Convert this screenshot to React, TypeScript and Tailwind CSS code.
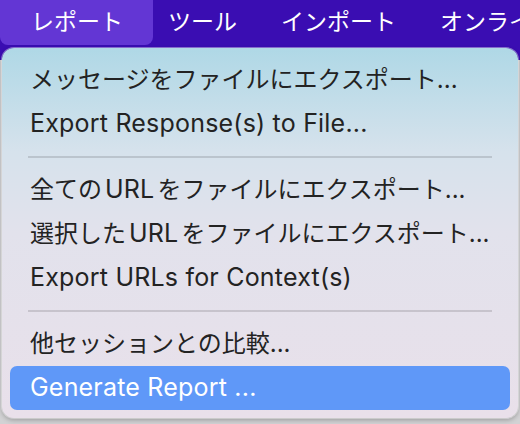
const FONT = "font-['Inter','Noto_Sans_CJK_JP',sans-serif]";

const MENUBAR = ["ツール", "インポート", "オンライン"];

type Row = { label: string; latin?: boolean; active?: boolean } | "sep";

const ITEMS: Row[] = [
  { label: "メッセージをファイルにエクスポート..." },
  { label: "Export Response(s) to File...", latin: true },
  "sep",
  { label: "全ての|URL|をファイルにエクスポート..." },
  { label: "選択した|URL|をファイルにエクスポート..." },
  { label: "Export URLs for Context(s)", latin: true },
  "sep",
  { label: "他セッションとの比較..." },
  { label: "Generate Report ...", latin: true, active: true },
];

// "|"-delimited middle part is Latin text set inside Japanese
function Label({ text }: { text: string }) {
  const parts = text.split("|");
  if (parts.length === 1) return <>{text}</>;
  return (
    <>
      {parts[0]}
      <span className="px-[3px] text-[25px] tracking-[0.2px]">{parts[1]}</span>
      {parts[2]}
    </>
  );
}

export default function App() {
  return (
    <div
      className={`w-[520px] h-[424px] overflow-hidden bg-[linear-gradient(#3a0db2_0_60px,#d2d2d4_60px)] ${FONT}`}
    >
      {/* Menu bar */}
      <div className="flex h-[48px] items-start bg-[#3a0db2] text-[23px] text-white whitespace-nowrap">
        <div className="flex h-[45px] w-[153px] shrink-0 items-center rounded-b-[8px] bg-[#6336d4] pl-[31px]">
          レポート
        </div>
        <div className="ml-[15px] flex h-[45px] shrink-0 items-center gap-[44px]">
          {MENUBAR.map((m) => (
            <span key={m}>{m}</span>
          ))}
        </div>
      </div>

      {/* Dropdown */}
      <div className="ml-[2px] w-[516px] rounded-[12px] bg-[linear-gradient(180deg,#afd8e6_0%,#d6e2ec_28%,#e2e2ec_50%,#e9e0ea_100%)] pt-[10px] pb-[8px] shadow-[0_2px_5px_rgba(0,0,0,0.28)] ring-1 ring-white/40">
        {ITEMS.map((it, i) =>
          it === "sep" ? (
            <div key={i} className="flex h-[22px] items-center px-[26px]">
              <div className="h-[2px] w-full bg-black/[0.13]" />
            </div>
          ) : (
            <div
              key={i}
              className={`mx-[8px] flex h-[44px] items-center rounded-[7px] px-[20px] whitespace-nowrap ${
                it.latin ? "text-[25px] tracking-[0.2px]" : "text-[24px]"
              } ${it.active ? "bg-[#5f98f8] text-white" : "text-[#232323]"}`}
            >
              <Label text={it.label} />
            </div>
          )
        )}
      </div>
    </div>
  );
}
